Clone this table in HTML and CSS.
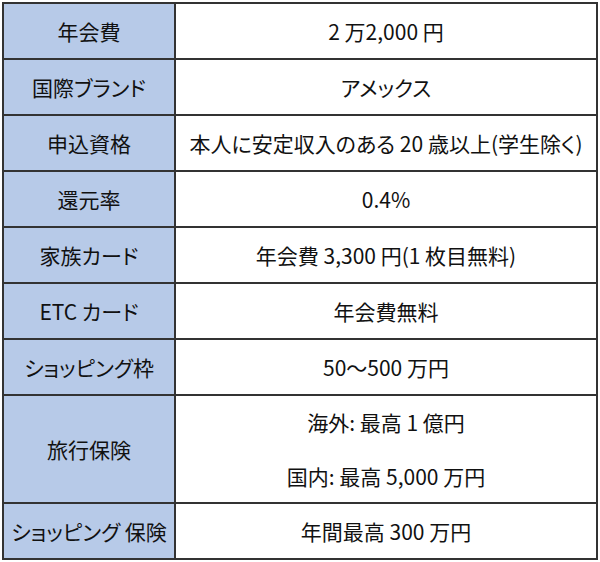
FILE: index.html
```html
<!DOCTYPE html>
<html lang="ja">
<head>
<meta charset="utf-8">
<link rel="stylesheet" href="styles.css">
</head>
<body>
<div class="spec">
  <div class="row"><div class="label">年会費</div><div class="value">2 万2,000 円</div></div>
  <div class="row"><div class="label">国際ブランド</div><div class="value">アメックス</div></div>
  <div class="row"><div class="label">申込資格</div><div class="value">本人に安定収入のある 20 歳以上(学生除く)</div></div>
  <div class="row"><div class="label">還元率</div><div class="value">0.4%</div></div>
  <div class="row"><div class="label">家族カード</div><div class="value">年会費 3,300 円(1 枚目無料)</div></div>
  <div class="row"><div class="label">ETC カード</div><div class="value">年会費無料</div></div>
  <div class="row"><div class="label">ショッピング枠</div><div class="value">50～500 万円</div></div>
  <div class="row tall"><div class="label">旅行保険</div><div class="value multi"><div>海外: 最高 1 億円</div><div>国内: 最高 5,000 万円</div></div></div>
  <div class="row"><div class="label">ショッピング 保険</div><div class="value">年間最高 300 万円</div></div>
</div>
</body>
</html>
```
FILE: styles.css
```css
html, body {
  margin: 0;
  padding: 0;
  background: #ffffff;
}
body {
  font-family: "Noto Sans CJK JP", "Noto Sans", sans-serif;
  color: #111;
}
.spec {
  margin: 2px 0 0 2px;
  width: 596px;
  box-sizing: border-box;
  border-top: 2px solid #333;
  border-left: 2px solid #333;
  display: grid;
  grid-template-columns: 172px 422px;
}
.row {
  display: contents;
}
.label, .value {
  height: 56px;
  box-sizing: border-box;
  border-right: 2px solid #333;
  border-bottom: 2px solid #333;
  display: flex;
  align-items: center;
  justify-content: center;
  font-size: 21px;
  line-height: 27px;
  text-align: center;
  white-space: nowrap;
  font-feature-settings: "palt";
}
.label {
  background: #b7cae8;
}
.value {
  background: #ffffff;
}
.tall .label, .tall .value {
  height: 108px;
}
.multi {
  flex-direction: column;
  gap: 27px;
}
```
